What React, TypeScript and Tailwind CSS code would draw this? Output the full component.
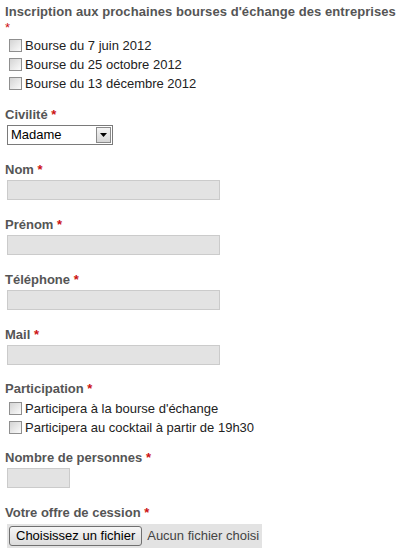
const font = { fontFamily: '"Liberation Sans", Arial, sans-serif' };

function Req() {
	return <span className="text-[#cc1111]"> *</span>;
}

function Box() {
	return (
		<span className="inline-block h-[13px] w-[13px] shrink-0 border border-[#8f8f8f] bg-gradient-to-br from-[#d4d4d4] to-[#fbfbfb]" />
	);
}

function Check({ label }: { label: string }) {
	return (
		<label className="flex h-[19px] items-center gap-[3px] pl-[4px] text-[13px] text-[#222]">
			<Box />
			<span>{label}</span>
		</label>
	);
}

function Label({ children }: { children: React.ReactNode }) {
	return (
		<div className="h-4 text-[13px] font-bold leading-4 text-[#555]">
			{children}
			<Req />
		</div>
	);
}

function TextField({ label, width }: { label: string; width: string }) {
	return (
		<div className="mt-[17px]">
			<Label>{label}</Label>
			<div
				className={`mt-[2px] ml-[2px] h-5 border border-[#cbcbcb] bg-[#e3e3e3] ${width}`}
			/>
		</div>
	);
}

export default function App() {
	return (
		<div className="min-h-[551px] w-[400px] bg-white pl-[5px] pt-[4px]" style={font}>
			<div className="whitespace-nowrap text-[13px] font-bold leading-4 tracking-[0.07px] text-[#555]">
				Inscription aux prochaines bourses d'échange des entreprises
			</div>
			<div className="h-4 text-[13px] leading-4 text-[#cc1111]">*</div>

			<div>
				<Check label="Bourse du 7 juin 2012" />
				<Check label="Bourse du 25 octobre 2012" />
				<Check label="Bourse du 13 décembre 2012" />
			</div>

			<div className="mt-[14px]">
				<Label>Civilité</Label>
				<div className="mt-[2px] ml-[2px] flex h-5 w-[106px] items-center border border-[#7a7a7a] bg-white">
					<span className="flex-1 pl-[3px] text-[13px] text-black">Madame</span>
					<span className="mr-px flex h-[16px] w-[15px] items-center justify-center border border-[#8a8a8a] bg-gradient-to-b from-[#f4f4f4] to-[#d6d6d6]">
						<svg width="7" height="4" viewBox="0 0 7 4">
							<path d="M0 0h7L3.5 4z" fill="#000" />
						</svg>
					</span>
				</div>
			</div>

			<TextField label="Nom" width="w-[213px]" />
			<TextField label="Prénom" width="w-[213px]" />
			<TextField label="Téléphone" width="w-[213px]" />
			<TextField label="Mail" width="w-[213px]" />

			<div className="mt-[16px]">
				<Label>Participation</Label>
				<div className="mt-[2px]">
					<Check label="Participera à la bourse d'échange" />
					<Check label="Participera au cocktail à partir de 19h30" />
				</div>
			</div>

			<div className="mt-[13px]">
				<Label>Nombre de personnes</Label>
				<div className="mt-[2px] ml-[2px] h-5 w-[63px] border border-[#cbcbcb] bg-[#e3e3e3]" />
			</div>

			<div className="mt-[17px]">
				<Label>Votre offre de cession</Label>
				<div className="mt-[3px] ml-[2px] flex h-[24px] w-[255px] items-center overflow-hidden whitespace-nowrap bg-[#e3e3e3] pl-[2px]">
					<span className="flex h-5 items-center rounded-[3px] border border-[#707070] bg-gradient-to-b from-[#f6f6f6] to-[#dcdcdc] px-[6px] text-[13px] text-black">
						Choisissez un fichier
					</span>
					<span className="ml-[5px] text-[13px] text-[#444]">Aucun fichier choisi</span>
				</div>
			</div>
		</div>
	);
}
